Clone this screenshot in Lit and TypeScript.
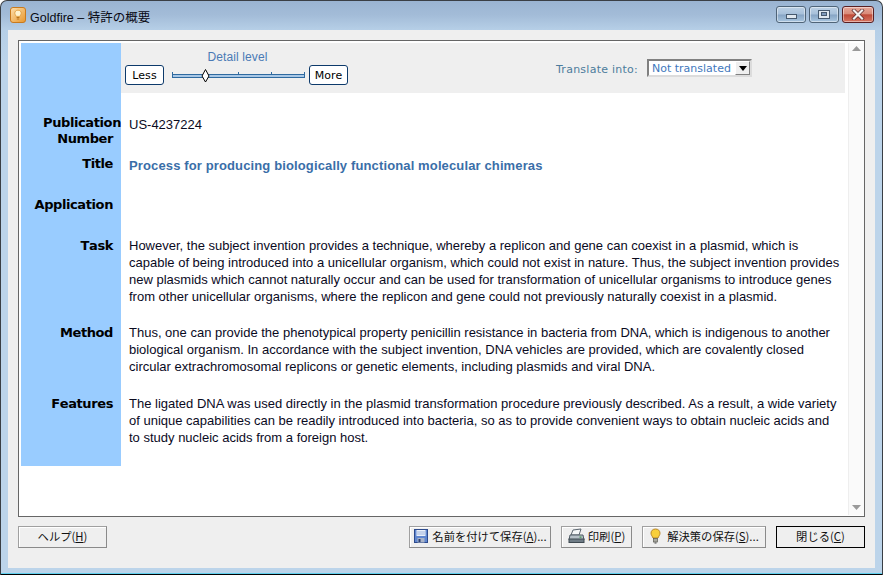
import { LitElement, html, css } from "lit";
import { customElement } from "lit/decorators.js";

@customElement("app-root")
export class AppRoot extends LitElement {
  static styles = css`
    :host { display: block; width: 883px; height: 575px; overflow: hidden; font-family: "Liberation Sans", Arial, sans-serif; background: #fff; }
    * { box-sizing: border-box; }
    .win { width: 883px; height: 575px; display: flex; flex-direction: column; padding: 0 7px 7px 7px;
      border: 1px solid #3a3f45; border-bottom: 0; border-radius: 7px 7px 0 0;
      background: linear-gradient(#9ab4d2 0, #a3bcd8 14px, #b6cfe7 29px, #bcd4ea 60px, #bcd4ea 100%);
      box-shadow: inset 0 -1px 0 #000, inset 0 -2px 0 #5fd0ee; }
    .title { height: 29px; flex: none; display: flex; align-items: center; padding: 0 0 0 2px; }
    .title > svg { margin-top: -1px; }
    .title .name { margin-left: 4px; margin-top: 1px; font-size: 12.5px; color: #0a0a14; font-family: "Liberation Sans", "Noto Sans CJK JP", sans-serif; }
    .caps { margin-left: auto; display: flex; gap: 3px; margin-right: 1px; margin-top: -3px; }
    .cap { height: 17px; width: 30px; border: 1px solid #4f6478; border-radius: 3px; display: flex; align-items: center; justify-content: center;
      background: linear-gradient(#bcd0e4 0, #a7c0da 48%, #86a4c4 52%, #a9c6e0 100%); box-shadow: inset 0 0 0 1px rgba(255,255,255,.45); }
    .cap.x { width: 32px; border-color: #5a1f22; background: linear-gradient(#e6a79a 0, #d98a78 46%, #bf4a38 52%, #d67562 100%); }
    .cap .min { width: 11px; height: 5px; margin-top: 5px; background: #dfe7ef; border: 1px solid #46596e; }
    .cap .max { width: 12px; height: 9px; background: #dfe7ef; border: 1px solid #46596e; display: flex; align-items: center; justify-content: center; }
    .cap .max i { width: 6px; height: 4px; background: #7f9abb; border: 1px solid #46596e; display: block; }
    .client { flex: 1; background: #efefef; padding: 10px 10px 0 10px; display: flex; flex-direction: column; min-height: 0; width: 867px; }
    .box { width: 847px; height: 477px; flex: none; background: #fff; border: 1px solid #666; padding: 2px 0 0 2px; display: flex; }
    .main { width: 824px; flex: none; }
    .scroll { margin-left: 3px; width: 16px; height: 472px; background: #fafafa; display: flex; flex-direction: column; justify-content: space-between; align-items: center; padding: 3px 0 5px; border-left: 1px solid #eee; }
    .row { display: flex; }
    .lab { width: 100px; flex: none; background: #99ccff; text-align: right; padding: 1px 8px 0 0; font: bold 13px/16px "DejaVu Sans", Verdana, sans-serif; font-kerning: none; color: #000; letter-spacing: -0.4px; }
    .over { margin-right: -8px; }
    .val { flex: 1; padding-left: 8px; font-size: 13px; line-height: 17px; color: #0a0a1e; white-space: nowrap; }
    .top { height: 50px; }
    .bar { flex: 1; background: #efefef; display: flex; padding-left: 4px; }
    .less, .more { font: 11px/19px "DejaVu Sans", Verdana, sans-serif; height: 20px; width: 39px; border: 1px solid #0d3a6b; border-radius: 3px; background: #fff; text-align: center; color: #000; margin-top: 22px; letter-spacing: .1px; }
    .slider { width: 145px; display: flex; flex-direction: column; align-items: center; padding-left: 4px; }
    .dl { font-size: 12px; line-height: 14px; color: #4a7ab5; margin: 7px 2px 4px 0; letter-spacing: .1px; }
    .slider svg { display: block; }
    .tr { margin-left: auto; display: flex; margin-right: 93px; align-items: flex-start; }
    .tr label { font: 11px/14px "DejaVu Sans", Verdana, sans-serif; color: #4d7c9c; margin-top: 20px; margin-right: 9px; letter-spacing: .25px; }
    .sel { width: 105px; height: 18px; margin-top: 16px; border: 2px solid #808080; border-right-color: #dcdcdc; border-bottom-color: #dcdcdc; background: #fff; display: flex; justify-content: space-between; font: 11px/15px "DejaVu Sans", Verdana, sans-serif; color: #3f78bd; padding-left: 3px; }
    .sel b { width: 15px; height: 14px; background: #efefef; border: 1px solid #808080; border-left-color:#fff; border-top-color:#fff; display: flex; align-items: center; justify-content: center; }
    .pad-pub { padding-top: 22px; height: 62px; }
    .title-row { height: 41px; }
    .app-row { height: 41px; }
    .task-row { height: 87px; }
    .meth-row { height: 71px; }
    .feat-row { height: 71px; }
    .val.pn { padding-top: 23px; }
    .ttl { font-size: 13px; font-weight: bold; color: #3a6ea8; line-height: 17px; padding-top: 2px; letter-spacing: .13px; }
    .foot { flex: none; display: flex; margin-top: 9px; width: 847px; }
    .btn { height: 22px; border: 1px solid #a0a0a0; border-right-color: #8a8a8a; border-bottom-color: #8a8a8a; background: #efefef; box-shadow: inset 1px 1px 0 #fff; display: flex; align-items: center; justify-content: center; padding-bottom: 2px; font: 11.3px/14px "Noto Sans CJK JP", sans-serif; color: #111; white-space: nowrap; }
    .btn u { text-decoration: underline; text-underline-offset: 1px; }
    .btn svg { margin-right: 3px; flex: none; }
    .help { width: 89px; margin-right: auto; }
    .save { width: 142px; }
    .print { width: 71px; margin-left: 10px; }
    .sol { width: 124px; margin-left: 10px; }
    .sol svg { margin-right: 5px; }
    .shut { width: 89px; margin-left: 10px; border: 1px solid #000; box-shadow: none; }
  `;

  render() {
    return html`
      <div class="win">
        <div class="title">
          <svg width="16" height="16" viewBox="0 0 16 16">
            <defs><linearGradient id="o" x1="0" y1="0" x2="1" y2="1"><stop offset="0" stop-color="#fde0ae"/><stop offset="1" stop-color="#e8962c"/></linearGradient></defs>
            <rect x=".5" y=".5" width="15" height="15" rx="2.5" fill="url(#o)" stroke="#c87a1e"/>
            <path d="M8 3.2c-2 0-3.2 1.3-3.2 3 0 1.3 1 2 1.4 3.2h3.6c.4-1.2 1.4-1.900 1.400-3.200 0-1.700-1.200-3-3.200-3z" fill="#fff3cf" stroke="#d8902c" stroke-width=".7"/>
            <path d="M6.600 10.500h2.800M6.800 12h2.400" stroke="#b8741e" stroke-width="1"/>
          </svg>
          <span class="name">Goldfire – 特許の概要</span>
          <div class="caps">
            <div class="cap"><span class="min"></span></div>
            <div class="cap"><span class="max"><i></i></span></div>
            <div class="cap x">
              <svg width="14" height="11" viewBox="0 0 14 11"><path d="M3 1.500l8 8M11 1.500l-8 8" stroke="#5a2a2a" stroke-width="3.600" stroke-linecap="square"/><path d="M3 1.500l8 8M11 1.500l-8 8" stroke="#f4f1f1" stroke-width="2.200" stroke-linecap="square"/></svg>
            </div>
          </div>
        </div>
        <div class="client">
          <div class="box">
            <div class="main">
              <div class="row top">
                <div class="lab"></div>
                <div class="bar">
                  <div class="less">Less</div>
                  <div class="slider">
                    <div class="dl">Detail level</div>
                    <svg width="135" height="14" viewBox="0 0 135 14">
                      <rect x="1.500" y="6.500" width="132" height="3" fill="#a9c8e6" stroke="#2f6aa0"/>
                      <path d="M1.500 4v5M133.500 4v5M67.500 4v3M100.500 4v3" stroke="#2f6aa0"/>
                      <path d="M34.500 1.500l3.500 6.500-3.500 6-3.500-6z" fill="#fff" stroke="#000"/>
                    </svg>
                  </div>
                  <div class="more">More</div>
                  <div class="tr">
                    <label>Translate into:</label>
                    <div class="sel">Not translated
                      <b><svg width="8" height="5" viewBox="0 0 8 5"><path d="M0 0h8L4 5z" fill="#000"/></svg></b>
                    </div>
                  </div>
                </div>
              </div>
              <div class="row">
                <div class="lab pad-pub"><div class="over">Publication</div>Number</div>
                <div class="val pad-pub pn">US-4237224</div>
              </div>
              <div class="row">
                <div class="lab title-row">Title</div>
                <div class="val title-row ttl">Process for producing biologically functional molecular chimeras</div>
              </div>
              <div class="row">
                <div class="lab app-row">Application</div>
                <div class="val app-row"></div>
              </div>
              <div class="row">
                <div class="lab task-row">Task</div>
                <div class="val task-row">However, the subject invention provides a technique, whereby a replicon and gene can coexist in a plasmid, which is<br />capable of being introduced into a unicellular organism, which could not exist in nature. Thus, the subject invention provides<br />new plasmids which cannot naturally occur and can be used for transformation of unicellular organisms to introduce genes<br />from other unicellular organisms, where the replicon and gene could not previously naturally coexist in a plasmid.</div>
              </div>
              <div class="row">
                <div class="lab meth-row">Method</div>
                <div class="val meth-row">Thus, one can provide the phenotypical property penicillin resistance in bacteria from DNA, which is indigenous to another<br />biological organism. In accordance with the subject invention, DNA vehicles are provided, which are covalently closed<br />circular extrachromosomal replicons or genetic elements, including plasmids and viral DNA.</div>
              </div>
              <div class="row">
                <div class="lab feat-row">Features</div>
                <div class="val feat-row">The ligated DNA was used directly in the plasmid transformation procedure previously described. As a result, a wide variety<br />of unique capabilities can be readily introduced into bacteria, so as to provide convenient ways to obtain nucleic acids and<br />to study nucleic acids from a foreign host.</div>
              </div>
            </div>
            <div class="scroll">
              <svg width="9" height="5" viewBox="0 0 9 5"><path d="M4.500 0L9 5H0z" fill="#9a9a9a"/></svg>
              <svg width="9" height="5" viewBox="0 0 9 5"><path d="M0 0h9L4.500 5z" fill="#9a9a9a"/></svg>
            </div>
          </div>
          <div class="foot">
            <div class="btn help">ヘルプ(<u>H</u>)</div>
            <div class="btn save">
              <svg width="16" height="16" viewBox="0 0 16 16"><rect x="1.500" y="1.500" width="13" height="13" fill="#5f86cf" stroke="#2d4a8c"/><rect x="3.500" y="2" width="9" height="6" fill="#eaf0fa"/><path d="M4 4h8M4 6h8" stroke="#9fb4dc"/><rect x="4.500" y="10" width="7" height="4.500" fill="#aab4c8"/><rect x="5.500" y="11" width="2" height="3" fill="#2b3f70"/></svg>
              名前を付けて保存(<u>A</u>)...
            </div>
            <div class="btn print">
              <svg width="17" height="16" viewBox="0 0 17 16"><path d="M5 2l8-1-2 6H3z" fill="#f4f6f8" stroke="#5c6670"/><path d="M2 7h13l1 5H1z" fill="#b6c0c8" stroke="#4e5a64"/><rect x="1" y="11" width="15" height="3.500" fill="#6f7c86" stroke="#3f4a52"/><rect x="11.500" y="8.500" width="2" height="1.200" fill="#3f9a4a"/></svg>
              印刷(<u>P</u>)
            </div>
            <div class="btn sol">
              <svg width="13" height="16" viewBox="0 0 13 16"><path d="M6.500 1C3.600 1 2 3 2 5.200c0 2 1.400 3 2 4.800h5c.6-1.800 2-2.800 2-4.800C11 3 9.400 1 6.500 1z" fill="#f8cf3c" stroke="#b8862a"/><rect x="4.500" y="10.500" width="4" height="3.500" fill="#a8a8a0" stroke="#5a5a52" stroke-width=".7"/><path d="M5.500 15h2" stroke="#444"/></svg>
              解決策の保存(<u>S</u>)...
            </div>
            <div class="btn shut">閉じる(<u>C</u>)</div>
          </div>
        </div>
      </div>
    `;
  }
}
